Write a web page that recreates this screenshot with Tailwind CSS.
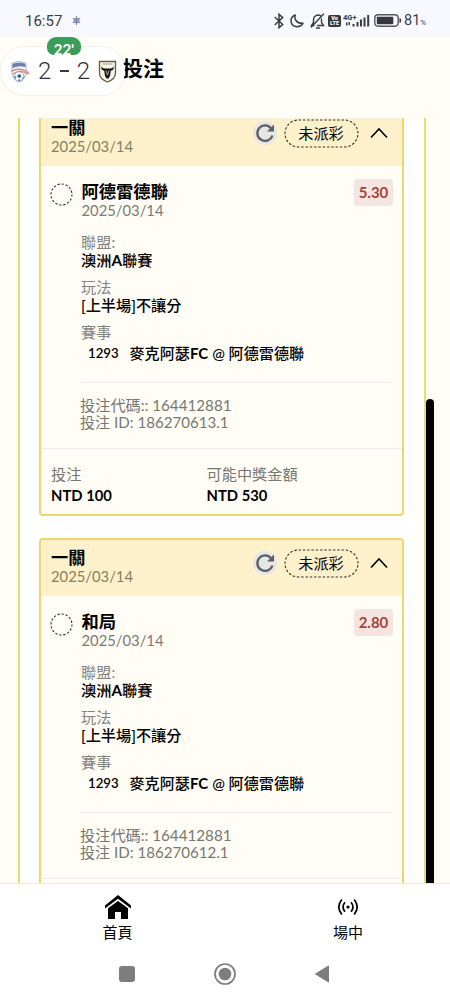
<!DOCTYPE html>
<html lang="zh-Hant">
<head>
<meta charset="utf-8">
<meta name="viewport" content="width=device-width">
<title>投注</title>
<script src="https://cdn.jsdelivr.net/npm/@tailwindcss/browser@4"></script>
</head>
<body class="relative flex h-[1000px] w-[450px] flex-col overflow-hidden bg-[#fffdf6] font-['Lato','Noto_Sans_CJK_TC',sans-serif] text-[15.2px] text-black">

<div class="flex h-[37px] shrink-0 items-center bg-[#f8f9ff] pt-[4px] pl-[25px] font-[Roboto,sans-serif] text-[16px] text-[#3b3d43]">
  <span class="w-[47px] text-[15px] leading-5">16:57</span>
  <svg class="h-[9px] w-[9px]" viewBox="0 0 9 9" fill="none" stroke="#7b8cab" stroke-width="1.1"><path d="M4.5 0v9M.8 2.3l7.4 4.4M8.2 2.3L.8 6.7"/><circle cx="4.5" cy="4.5" r="2.3"/></svg>
  <svg class="ml-[193px] h-[16px] w-[10px]" viewBox="0 0 10 16" fill="none" stroke="currentColor" stroke-width="1.5"><path d="M.7 4l8 7.4L5 14.7V1.3L8.7 4.6l-8 7.4"/></svg>
  <svg class="ml-[6px] h-[14px] w-[14px]" viewBox="0 0 14 14" fill="none" stroke="currentColor" stroke-width="1.5" stroke-linejoin="round"><path d="M5.3 1C4 4.2 5.8 9.6 13 9.3 9.5 15 1 13.200 1 6.800 1 4 3 1.800 5.300 1z"/></svg>
  <svg class="ml-[6px] h-[16px] w-[15px]" viewBox="0 0 15 16" fill="none" stroke="currentColor" stroke-width="1.400"><path d="M10.800 2.800C7.500.8 3.500 3 3.500 6.500v3L1.500 12.500h3M7 12.500h6.500l-2-3V5.500M13.800.7L1 14.500M6 15h4"/></svg>
  <span class="ml-[3px] flex h-[12px] w-[13px] flex-col items-center justify-center rounded-[2px] bg-[#36383d] text-[5.500px] leading-[5px] font-black text-white"><span>Vo</span><span>LTE</span></span>
  <svg class="ml-[2px] h-[15px] w-[27px]" viewBox="0 0 27 15" fill="currentColor"><text x="0" y="6.500" font-size="7.500" font-weight="700" font-family="Roboto">4G+</text><path d="M3 9.500h1.500v3H3zM5.500 9H7v3H5.500zM9.500 11h2v2.500h-2zM13.500 9h2v4.500h-2zM17 6.500h2v7h-2zM20.500 4.500h2v9h-2zM24.200 2h2v11.500h-2z"/></svg>
  <svg class="ml-[4px] h-[13px] w-[28px]" viewBox="0 0 28 13"><rect x=".8" y=".8" width="23.400" height="11.400" rx="3.400" fill="none" stroke="#56585d" stroke-width="1.400"/><rect x="2.800" y="2.800" width="16.500" height="7.400" rx="1" fill="#36383d"/><path d="M26 4.500q1.500 2 0 4z" fill="#36383d" stroke="#36383d"/></svg>
  <span class="ml-[2px] flex h-5 items-baseline text-[14.500px] leading-5">81<span class="text-[8px]">%</span></span>
</div>

<header class="flex h-[81px] shrink-0 pt-[16px] pl-[122px]">
  <h1 class="text-[21px] leading-[30px] font-bold">投注</h1>
</header>

<div class="absolute top-[47px] left-[1px] flex h-[48px] w-[124px] items-center rounded-full bg-white pl-[9px] font-[Roboto,sans-serif] text-[#303033] shadow-[0_0_2px_1px_#0000000f]">
  <svg class="h-[23px] w-[20px]" viewBox="0 0 20 23"><path d="M2 3Q9 0 16 3v10q0 6-7 9-7-3-7-9z" fill="#eef1f7" stroke="#8e9ab3" stroke-width=".7"/><path d="M2.500 4Q9 1.500 15.500 4v3Q9 5 2.500 8z" fill="#6781ae"/><path d="M1 11.500Q8 7 17 11.500L19 14M3 14Q10 9 18 14" fill="none" stroke="#d98d85" stroke-width="1.300"/><circle cx="9" cy="16.500" r="4.800" fill="#f6f8fc" stroke="#7187ad" stroke-width=".6"/><path d="M8 14.500h2.500l.7 2L9.300 18l-2-1.500zM4.500 16l1.800 1-.5 2zM12 19.500l.5-2 1.300-.5zM8 20l1.200-.7 1.300.7-1.500 1z" fill="#31508d"/></svg>
  <div class="ml-[8px] flex w-[52px] items-center justify-between text-[24px] leading-[28px] font-light"><span>2</span><span class="h-[2px] w-[9px] bg-[#39393c]"></span><span>2</span></div>
  <svg class="ml-[8px] h-[23px] w-[19px]" viewBox="0 0 19 23"><path d="M1.500 1.500h16V13q0 6-8 9-8-3-8-9z" fill="#f8f3e2" stroke="#635d4b" stroke-width="1.300"/><path d="M4.500 4h10" stroke="#a39b84"/><path d="M3.600 6q.2 2.500 3.700 2.500h4.400q3.500 0 3.700-2.500 1.200 4-2.600 4.800L12 16l-1.500 2.500h-2L7 16l-.8-5.200Q2.400 10 3.600 6z" fill="#171819"/><path d="M8 10.500l1.500 4.500 1.500-4.500" fill="none" stroke="#ddd" stroke-width=".7"/></svg>
</div>
<div class="absolute top-[37px] left-[47px] flex h-[18px] w-[34px] justify-center rounded-t-[9px] rounded-b-[7px] bg-[#3d9c58] pt-[2px] text-[15px] leading-[20px] font-bold text-white">22'</div>
<div class="absolute top-[55px] left-[47px] h-[5px] w-[34px] bg-white"></div>

<main class="h-[765px] shrink-0 overflow-hidden pr-[24px] pl-[18px]">
  <section id="bets" class="flex h-[800px] flex-col gap-[22px] border-x-2 border-[#eadd70] bg-white px-[19px]"></section>
</main>
<div class="absolute top-[399px] left-[426px] h-[484px] w-[8px] rounded-t-full bg-black"></div>

<nav class="flex h-[66px] shrink-0 border-t border-[#ebebe8] bg-white pt-[10px] text-center text-[15px]">
  <a class="flex w-[235px] shrink-0 flex-col items-center">
    <svg class="h-[26px] w-[28px]" viewBox="0 0 28 26"><path d="M1 11.500L14 1l13 10.500v3L14 4.800 1 14.500z"/><path d="M14 7l10 7.300V25h-7v-7h-6v7H4V14.300z"/></svg>
    <span class="mt-[2px] leading-[20px]">首頁</span>
  </a>
  <a class="flex w-[226px] shrink-0 flex-col items-center">
    <svg class="h-[26px] w-[22px]" viewBox="0 0 22 26" fill="none" stroke="black" stroke-width="1.700"><path d="M4.800 5.500q-6 7.500 0 15M17.200 5.500q6 7.500 0 15M8 8.300q-4 4.700 0 9.400M14 8.300q4 4.700 0 9.400"/><circle cx="11" cy="13" r="1.600" fill="black" stroke="none"/></svg>
    <span class="mt-[2px] leading-[20px]">場中</span>
  </a>
</nav>
<div class="flex h-[51px] shrink-0 items-start bg-white pt-[14px] pl-[119px]">
  <span class="mt-[3px] h-[16px] w-[16px] rounded-[3px] bg-[#7d7d7d]"></span>
  <svg class="ml-[79px] h-[22px] w-[22px]" viewBox="0 0 22 22"><circle cx="11" cy="11" r="10" fill="none" stroke="#7d7d7d" stroke-width="1.700"/><circle cx="11" cy="11" r="6.300" fill="#7d7d7d"/></svg>
  <svg class="ml-[78px] mt-[2px] h-[18px] w-[16px]" viewBox="0 0 16 18"><path d="M14.500 1v16L1.500 9z" fill="#7d7d7d" stroke="#7d7d7d" stroke-linejoin="round"/></svg>
</div>

<script>
const bets = [
  { team: '阿德雷德聯', odds: '5.30', id: '186270613.1', first: true },
  { team: '和局', odds: '2.80', id: '186270612.1' },
];
document.getElementById('bets').innerHTML = bets.map(b => `
<article class="h-[408px] w-[365px] shrink-0 overflow-hidden rounded-[4px] border-2 border-[#ecd86e] bg-[#fffdf5] ${b.first ? '-mt-[10px]' : ''}">
  <div class="flex h-[56px] bg-[#fdf1cc] pl-[10px]">
    <div class="w-[202px] pt-[8px]">
      <div class="text-[17.200px] leading-[20px] font-bold">一關</div>
      <div class="text-[14.800px] leading-[16px] text-[#85805f]">2025/03/14</div>
    </div>
    <div class="mt-[11px] flex h-[24px] w-[24px] items-center justify-center rounded-full bg-[#e6e6e3]">
      <svg class="h-[20px] w-[20px]" viewBox="0 0 20 20" fill="none" stroke="#5d6066" stroke-width="2.300"><path d="M16.200 5.500A7.700 7.700 0 1 0 17.400 12.500"/><path d="M19 1.500v7h-7z" fill="#5d6066" stroke="none"/></svg>
    </div>
    <svg class="ml-[7px] mt-[9px] h-[29px] w-[75px]" viewBox="0 0 75 29"><rect x="1" y="1" width="73" height="27" rx="13.500" fill="none" stroke="#35332a" stroke-width="1.100" stroke-dasharray="2.500 1.800"/><text x="37" y="19.700" font-size="15.200" text-anchor="middle">未派彩</text></svg>
    <svg class="ml-[10px] mt-[17px] h-[12px] w-[20px]" viewBox="0 0 20 12" fill="none" stroke="black" stroke-width="1.600"><path d="M2 10.500l8-8.500 8 8.500"/></svg>
  </div>
  <div class="flex h-[283px] border-b border-[#edebe6] pt-[13px] pl-[9px]">
    <svg class="mt-[4px] h-[23px] w-[24px] shrink-0" viewBox="0 0 24 23"><circle cx="11.500" cy="11.500" r="10.500" fill="none" stroke="#333" stroke-width="1.100" stroke-dasharray="2.300 1.800"/></svg>
    <div class="w-[324px] pl-[7px]">
      <div class="flex h-[43px] justify-between">
        <div>
          <div class="pt-[2px] pl-[.5px] text-[17.300px] leading-[21px] font-bold">${b.team}</div>
          <div class="pl-[.5px] text-[14.800px] leading-[16px] text-[#7b7b76]">2025/03/14</div>
        </div>
        <div class="mr-[5px] h-[27px] w-[39px] shrink-0 rounded-[4px] bg-[#f4e5e1] text-center text-[15px] leading-[27px] font-bold text-[#a54439]">${b.odds}</div>
      </div>
      <div class="mt-[11px] leading-[18px] text-[#84847f]">聯盟:</div>
      <div class="leading-[18px] font-medium">澳洲<b>A</b>聯賽</div>
      <div class="mt-[9px] leading-[18px] text-[#84847f]">玩法</div>
      <div class="leading-[18px] font-medium">[上半場]不讓分</div>
      <div class="mt-[9px] leading-[18px] text-[#84847f]">賽事</div>
      <div class="mt-[3px] flex pl-[7px] leading-[18px] font-medium"><span class="w-[41.500px] text-[13.200px] font-semibold">1293</span><span class="text-[15.100px] whitespace-pre">麥克阿瑟<b>FC</b> @ 阿德雷德聯</span></div>
      <div class="mt-[20px] mr-[7px] border-t border-[#edebe5]"></div>
      <div class="mt-[14px] -ml-[1px] leading-[16.500px] text-[#777772]"><div>投注代碼:: 164412881</div><div class="text-[15.100px]">投注 ID: ${b.id}</div></div>
    </div>
  </div>
  <div class="flex pt-[15px] pl-[10px]">
    <div class="w-[155.500px]"><div class="leading-[20px] text-[#777772]">投注</div><div class="text-[14.800px] leading-[22px] font-bold">NTD 100</div></div>
    <div><div class="leading-[20px] text-[#777772]">可能中獎金額</div><div class="text-[14.800px] leading-[22px] font-bold">NTD 530</div></div>
  </div>
</article>`).join('');
</script>
</body>
</html>
